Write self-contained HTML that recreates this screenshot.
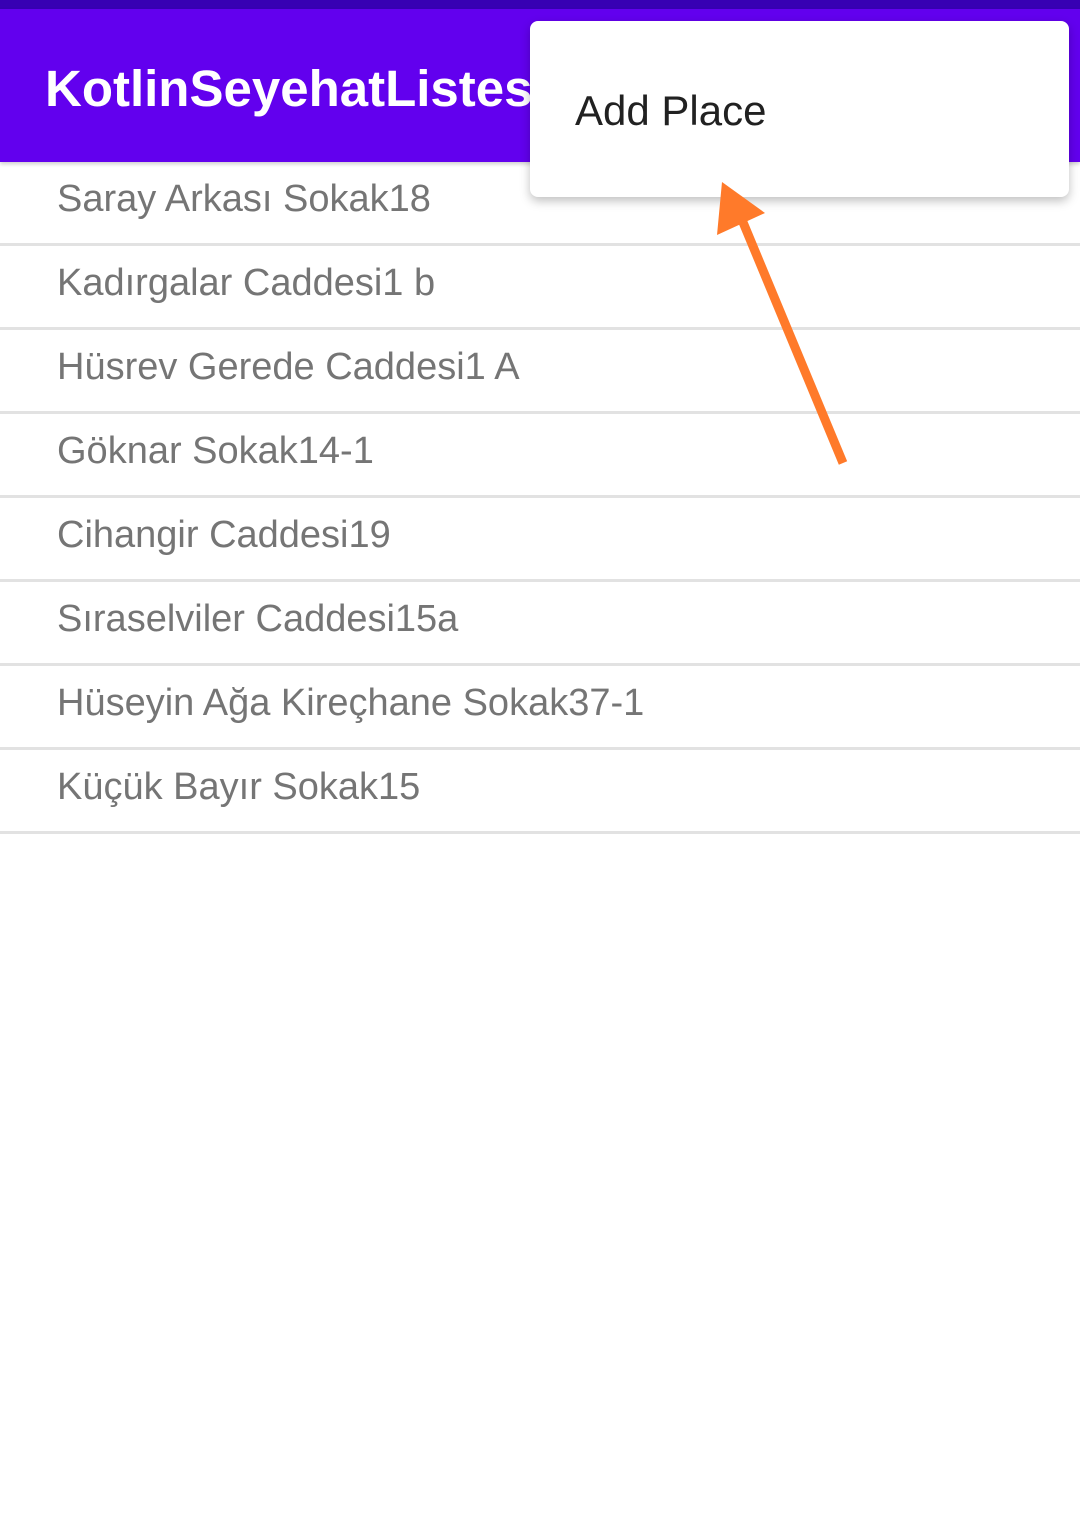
<!DOCTYPE html>
<html><head><meta charset="utf-8"><style>
*{margin:0;padding:0;box-sizing:border-box}
body{width:1080px;height:1523px;background:#fff;position:relative;overflow:hidden;font-family:"Liberation Sans",sans-serif}
.sb{position:absolute;left:0;top:0;width:1080px;height:9px;background:#3700b3}
.tb{position:absolute;left:0;top:9px;width:1080px;height:153px;background:#6200ee;box-shadow:0 2px 4px rgba(0,0,0,.2)}
.title{position:absolute;left:45px;top:59px;color:#fff;font-size:51px;font-weight:bold;white-space:nowrap;line-height:60px}
.row{position:absolute;left:0;width:1080px;height:84px;border-bottom:3px solid #e2e2e2}
.row span{position:absolute;left:57px;top:15px;font-size:38px;color:#757575;white-space:nowrap;line-height:44px}
.menu{position:absolute;left:530px;top:21px;width:539px;height:176px;background:#fff;border-radius:8px;box-shadow:0 4px 10px rgba(0,0,0,.25)}
.menu span{position:absolute;left:45px;top:66px;font-size:42px;color:#212121;line-height:48px}
svg{position:absolute;left:0;top:0}
</style></head><body>
<div class="sb"></div>
<div class="tb"></div>
<div class="title">KotlinSeyehatListesi</div>
<div class="row" style="top:162px"><span>Saray Arkası Sokak18</span></div>
<div class="row" style="top:246px"><span>Kadırgalar Caddesi1 b</span></div>
<div class="row" style="top:330px"><span>Hüsrev Gerede Caddesi1 A</span></div>
<div class="row" style="top:414px"><span>Göknar Sokak14-1</span></div>
<div class="row" style="top:498px"><span>Cihangir Caddesi19</span></div>
<div class="row" style="top:582px"><span>Sıraselviler Caddesi15a</span></div>
<div class="row" style="top:666px"><span>Hüseyin Ağa Kireçhane Sokak37-1</span></div>
<div class="row" style="top:750px"><span>Küçük Bayır Sokak15</span></div>
<div class="menu"><span>Add Place</span></div>
<svg width="1080" height="1523">
<line x1="843" y1="463" x2="740" y2="215" stroke="#ff7a2a" stroke-width="9"/>
<polygon points="722,182 717,235 765,213" fill="#ff7a2a"/>
</svg>
</body></html>
